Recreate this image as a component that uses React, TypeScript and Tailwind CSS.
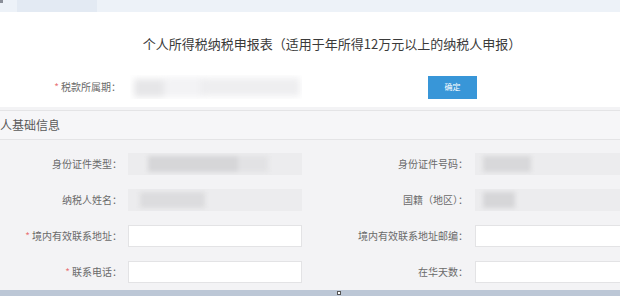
import React from "react";

const font = { fontFamily: '"Noto Sans CJK SC", "Noto Sans", sans-serif' };

function BlurInput({ w, blocks }: { w: string; blocks: { l: number; wd: number; c: string }[] }) {
  return (
    <div className={`relative h-[22px] ${w} overflow-hidden bg-[#ececee]`}>
      <div className="absolute inset-0 blur-[2px]">
        {blocks.map((b, i) => (
          <div
            key={i}
            className="absolute top-[3px] bottom-[3px]"
            style={{ left: b.l, width: b.wd, background: b.c }}
          />
        ))}
      </div>
    </div>
  );
}

function Label({ text, req, w }: { text: string; req?: boolean; w: string }) {
  return (
    <div className={`${w} shrink-0 text-right text-[10px] leading-none text-[#6a6a6a]`}>
      {req && <span className="text-[#e9747a] mr-[2px]">*</span>}
      {text}
    </div>
  );
}

export default function App() {
  return (
    <div style={font} className="w-[620px] h-[296px] overflow-hidden bg-white flex flex-col">
      <div className="h-[12px] bg-[#edf2f8] flex">
        <div className="w-[3px] h-[3px] bg-[#8a8f99]" />
        <div className="ml-[14px] w-[80px] bg-[#e3eaf3]" />
      </div>
      <div className="h-[95px] bg-white flex flex-col">
        <div className="h-[38px] flex items-end justify-center pl-[44px]">
          <span className="text-[13px] leading-none text-[#3a3a3a]">
            个人所得税纳税申报表（适用于年所得12万元以上的纳税人申报）
          </span>
        </div>
        <div className="mt-[25px] flex items-center">
          <Label text="税款所属期：" req w="w-[121px]" />
          <div className="ml-[9px] w-[172px] h-[24px] relative overflow-hidden">
            <div className="absolute inset-0 blur-[3px]">
              <div className="absolute left-[4px] top-[4px] bottom-[2px] w-[30px] bg-[#e6e6e8]" />
              <div className="absolute left-[34px] top-[2px] bottom-[2px] w-[40px] bg-[#f3f3f5]" />
              <div className="absolute left-[70px] top-[3px] bottom-[3px] w-[100px] bg-[#eeeef0]" />
            </div>
          </div>
          <button className="ml-[126px] w-[49px] h-[23px] bg-[#3896d8] text-white text-[8px] leading-none">
            确定
          </button>
        </div>
      </div>
      <div className="flex-1 bg-[#f3f3f5] flex flex-col pt-[3px]">
        <div className="h-[30px] border-t border-b border-[#e4e4e6] bg-[#f6f6f8] flex items-center">
          <span className="text-[12px] leading-none text-[#5a5a5a]">人基础信息</span>
        </div>
        <div className="flex flex-col pt-[6px]">
          {[
            {
              l: "身份证件类型：",
              r: "身份证件号码：",
              blur: true,
              lb: [
                { l: 20, wd: 90, c: "#d6d6d8" },
                { l: 110, wd: 30, c: "#e2e2e4" },
              ],
              rb: [{ l: 8, wd: 48, c: "#d8d8da" }],
            },
            {
              l: "纳税人姓名：",
              r: "国籍（地区）：",
              blur: true,
              lb: [{ l: 12, wd: 65, c: "#dcdcde" }],
              rb: [{ l: 8, wd: 32, c: "#d6d6d8" }],
            },
            { l: "境内有效联系地址：", r: "境内有效联系地址邮编：", req: true },
            { l: "联系电话：", r: "在华天数：", req: true },
          ].map((row, i) => (
            <div key={i} className="h-[36px] flex items-center">
              <Label text={row.l} req={row.req} w="w-[122px]" />
              <div className="ml-[6px]">
                {row.blur ? (
                  <BlurInput w="w-[174px]" blocks={row.lb!} />
                ) : (
                  <div className="w-[174px] h-[22px] bg-white border border-[#e3e3e5]" />
                )}
              </div>
              <Label text={row.r} w="w-[166px]" />
              <div className="ml-[7px]">
                {row.blur ? (
                  <BlurInput w="w-[160px]" blocks={row.rb!} />
                ) : (
                  <div className="w-[160px] h-[22px] bg-white border border-[#e3e3e5]" />
                )}
              </div>
            </div>
          ))}
        </div>
        <div className="mt-auto h-[6px] bg-[#bcc7d6] relative">
          <div className="absolute left-[337px] top-[1px] w-[4px] h-[4px] bg-white border border-[#555]" />
        </div>
      </div>
    </div>
  );
}
